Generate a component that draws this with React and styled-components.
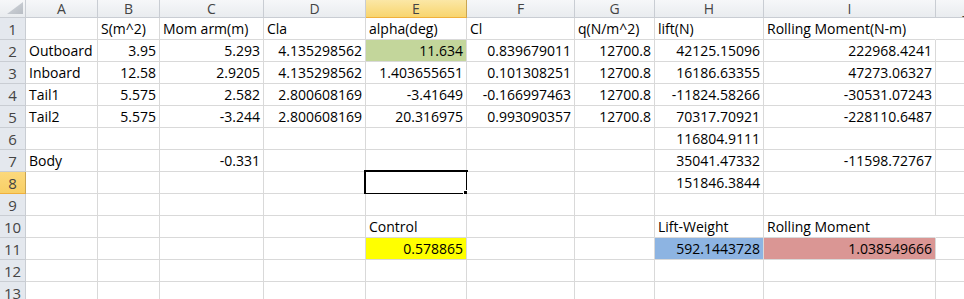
import { Fragment } from "react";
import styled, { createGlobalStyle, css } from "styled-components";

const GlobalStyle = createGlobalStyle`
    html, body {
        margin: 0;
        padding: 0;
        background: #ffffff;
        overflow: hidden;
    }
`;

const COLS = ["A", "B", "C", "D", "E", "F", "G", "H", "I", "J"];
const WIDTHS = [26, 72, 62, 104, 102, 101, 108, 80, 109, 172, 60];
const ROW_COUNT = 13;

const cellData = {
    "B1": "S(m^2)", "C1": "Mom arm(m)", "D1": "Cla", "E1": "alpha(deg)", "F1": "Cl",
    "G1": "q(N/m^2)", "H1": "lift(N)", "I1": "Rolling Moment(N-m)",
    "A2": "Outboard", "B2": 3.95, "C2": 5.293, "D2": 4.135298562, "E2": 11.634, "F2": 0.839679011,
    "G2": 12700.8, "H2": 42125.15096, "I2": 222968.4241,
    "A3": "Inboard", "B3": 12.58, "C3": 2.9205, "D3": 4.135298562, "E3": 1.403655651, "F3": 0.101308251,
    "G3": 12700.8, "H3": 16186.63355, "I3": 47273.06327,
    "A4": "Tail1", "B4": 5.575, "C4": 2.582, "D4": 2.800608169, "E4": -3.41649, "F4": -0.166997463,
    "G4": 12700.8, "H4": -11824.58266, "I4": -30531.07243,
    "A5": "Tail2", "B5": 5.575, "C5": -3.244, "D5": 2.800608169, "E5": 20.316975, "F5": 0.993090357,
    "G5": 12700.8, "H5": 70317.70921, "I5": -228110.6487,
    "H6": 116804.9111,
    "A7": "Body", "C7": -0.331, "H7": 35041.47332, "I7": -11598.72767,
    "H8": 151846.3844,
    "E10": "Control", "H10": "Lift-Weight", "I10": "Rolling Moment",
    "E11": 0.578865, "H11": 592.1443728, "I11": 1.038549666,
};

const fills = {
    "E2": "#c3d69b",
    "E11": "#ffff00",
    "H11": "#8db4e2",
    "I11": "#da9694",
};

const ACTIVE_COL = "E";
const ACTIVE_ROW = 8;

const Sheet = styled.div`
    display: grid;
    grid-template-columns: ${WIDTHS.map((w) => `${w}px`).join(" ")};
    grid-template-rows: 18px repeat(${ROW_COUNT}, 22px);
    font-family: "Open Sans", "Liberation Sans", Arial, sans-serif;
    font-size: 14px;
    color: #000;
    width: 964px;
    height: 299px;
    overflow: hidden;
`;

const headerBase = css`
    display: flex;
    align-items: center;
    justify-content: center;
    box-sizing: border-box;
    color: #444;
    font-size: 14px;
    background: linear-gradient(#f6f7f9, #e9ecef);
    border-right: 1px solid #c9cdd3;
    border-bottom: 1px solid #c9cdd3;
    ${(p) => p.$active && css`
        background: linear-gradient(#fbe7a6, #f8d56e);
        border-right-color: #c9a552;
        border-bottom-color: #f0b03c;
    `}
`;

const Corner = styled.div`
    ${headerBase};
    justify-content: flex-end;
    align-items: flex-end;
    padding: 0 2px 3px 0;
    svg { display: block; }
`;

const ColHeader = styled.div`
    ${headerBase};
    line-height: 16px;
`;

const RowHeader = styled.div`
    ${headerBase};
    background: ${(p) => (p.$active ? "linear-gradient(#fcd97c, #f8cf66)" : "#e4e8ee")};
    font-size: 15px;
    line-height: 18px;
    align-items: flex-end;
    padding-bottom: 1px;
`;

const Cell = styled.div`
    position: relative;
    box-sizing: border-box;
    display: flex;
    align-items: flex-end;
    justify-content: ${(p) => (p.$num ? "flex-end" : "flex-start")};
    padding: 0 3px 1px 3px;
    white-space: nowrap;
    background: ${(p) => p.$fill || "#fff"};
    border-right: 1px solid ${(p) => (p.$hideRight ? (p.$fill || "#fff") : "#d9d9d9")};
    border-bottom: 1px solid #d9d9d9;
    z-index: ${(p) => (p.$spill ? 1 : 0)};
`;

const Selection = styled.div`
    position: absolute;
    left: -2px;
    top: -2px;
    right: -2px;
    bottom: -2px;
    border: 2px solid #000;
    z-index: 2;
    pointer-events: none;
`;

const FillHandle = styled.span`
    position: absolute;
    right: -4px;
    bottom: -4px;
    width: 5px;
    height: 5px;
    background: #000;
    border: 1px solid #fff;
`;

const Text = styled.span`
    line-height: 18px;
`;

const App = () => {
    const rows = [];
    for (let r = 1; r <= ROW_COUNT; r++) rows.push(r);

    const renderCell = (col, row) => {
        const key = `${col}${row}`;
        const value = cellData[key];
        const isNum = typeof value === "number";
        const nextKey = `${COLS[COLS.indexOf(col) + 1]}${row}`;
        // text labels that spill over an empty neighbour
        const spills = typeof value === "string" && cellData[nextKey] === undefined && value.length > 8;
        const active = col === ACTIVE_COL && row === ACTIVE_ROW;
        return (
            <Cell key={key} $num={isNum} $fill={fills[key]} $hideRight={spills} $spill={spills}>
                {value !== undefined && <Text>{String(value)}</Text>}
                {active && (
                    <Selection>
                        <FillHandle />
                    </Selection>
                )}
            </Cell>
        );
    };

    return (
        <>
            <GlobalStyle />
            <Sheet>
                <Corner>
                    <svg width="16" height="12" viewBox="0 0 16 12">
                        <defs>
                            <linearGradient id="cornerFill" x1="0" y1="0" x2="1" y2="1">
                                <stop offset="0" stopColor="#d3d7dc" />
                                <stop offset="1" stopColor="#b8bdc4" />
                            </linearGradient>
                        </defs>
                        <polygon points="16,0 16,12 0,12" fill="url(#cornerFill)" />
                    </svg>
                </Corner>
                {COLS.map((c) => (
                    <ColHeader key={c} $active={c === ACTIVE_COL}>{c}</ColHeader>
                ))}
                {rows.map((r) => (
                    <Fragment key={r}>
                        <RowHeader $active={r === ACTIVE_ROW}>{r}</RowHeader>
                        {COLS.map((c) => renderCell(c, r))}
                    </Fragment>
                ))}
            </Sheet>
        </>
    );
};

export default App;
